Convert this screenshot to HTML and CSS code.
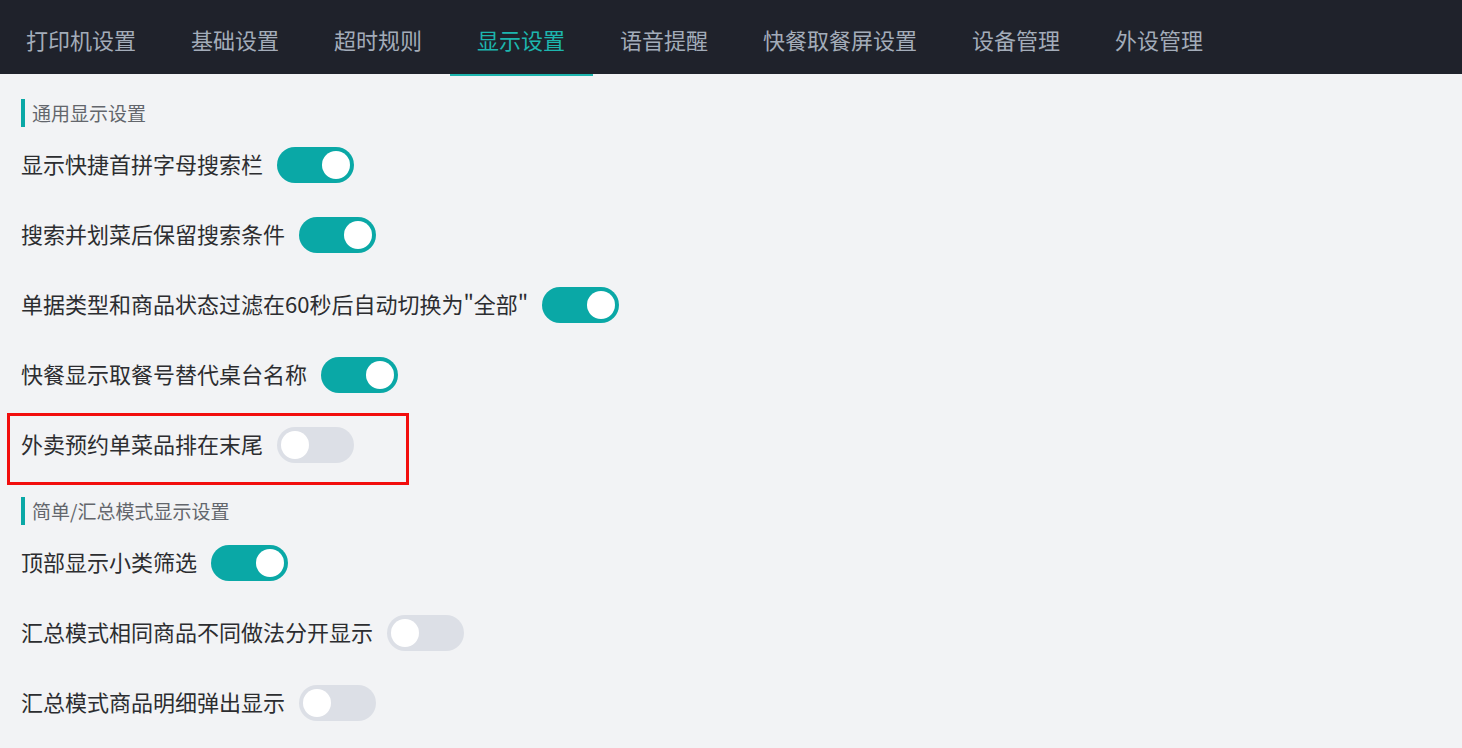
FILE: index.html
```html
<!DOCTYPE html>
<html lang="zh-CN">
<head>
    <meta charset="UTF-8">
    <meta name="viewport" content="width=device-width, initial-scale=1.0">
    <title>显示设置</title>
    <link rel="stylesheet" href="styles.css">
</head>
<body>
    <nav class="tabs">
        <a class="tab">打印机设置</a>
        <a class="tab">基础设置</a>
        <a class="tab">超时规则</a>
        <a class="tab active">显示设置</a>
        <a class="tab">语音提醒</a>
        <a class="tab">快餐取餐屏设置</a>
        <a class="tab">设备管理</a>
        <a class="tab">外设管理</a>
    </nav>

    <main class="content">
        <div class="section-title">通用显示设置</div>

        <div class="row">
            <span class="label">显示快捷首拼字母搜索栏</span>
            <span class="switch on"><span class="knob"></span></span>
        </div>
        <div class="row">
            <span class="label">搜索并划菜后保留搜索条件</span>
            <span class="switch on"><span class="knob"></span></span>
        </div>
        <div class="row">
            <span class="label">单据类型和商品状态过滤在60秒后自动切换为"全部"</span>
            <span class="switch on"><span class="knob"></span></span>
        </div>
        <div class="row">
            <span class="label">快餐显示取餐号替代桌台名称</span>
            <span class="switch on"><span class="knob"></span></span>
        </div>
        <!-- highlighted option -->
        <div class="row marked">
            <span class="label">外卖预约单菜品排在末尾</span>
            <span class="switch"><span class="knob"></span></span>
        </div>

        <div class="section-title">简单/汇总模式显示设置</div>

        <div class="row">
            <span class="label">顶部显示小类筛选</span>
            <span class="switch on"><span class="knob"></span></span>
        </div>
        <div class="row">
            <span class="label">汇总模式相同商品不同做法分开显示</span>
            <span class="switch"><span class="knob"></span></span>
        </div>
        <div class="row">
            <span class="label">汇总模式商品明细弹出显示</span>
            <span class="switch"><span class="knob"></span></span>
        </div>
    </main>
</body>
</html>
```

FILE: styles.css
```css
html, body {
    margin: 0;
    padding: 0;
}
body {
    font-family: "Noto Sans CJK SC", "Noto Sans", sans-serif;
    background-color: #f2f3f5;
    color: #2c2d30;
    height: 100vh;
    overflow: hidden;
}

/* Top tab bar */
.tabs {
    display: flex;
    height: 74px;
    background-color: #1f222b;
}
.tab {
    position: relative;
    display: flex;
    align-items: center;
    padding: 4px 27.5px 0;
    font-size: 22px;
    color: #a3acb9;
    cursor: pointer;
}
.tab:first-child {
    padding-left: 26px;
}
.tab.active {
    color: #1db5ae;
}
.tab.active::after {
    content: "";
    position: absolute;
    left: 0;
    right: 0;
    bottom: -2px;
    height: 2px;
    background-color: #1db5ae;
}

/* Settings list */
.content {
    padding: 8px 21px 0;
}
.section-title {
    height: 28px;
    line-height: 28px;
    margin: 17px 0 3px;
    padding-left: 7px;
    border-left: 4px solid #0aa8a6;
    font-size: 19px;
    color: #63666c;
}
.row {
    position: relative;
    display: flex;
    align-items: center;
    gap: 14px;
    height: 70px;
}
.label {
    font-size: 22px;
    line-height: 30px;
    margin-bottom: 4px;
}
.row.marked::after {
    content: "";
    position: absolute;
    left: -14px;
    top: 3px;
    width: 396px;
    height: 66px;
    border: 3px solid #f20d0d;
    pointer-events: none;
}

/* Toggle switch */
.switch {
    display: flex;
    align-items: center;
    justify-content: flex-start;
    box-sizing: border-box;
    width: 77px;
    height: 36px;
    padding: 0 4px;
    border-radius: 18px;
    background-color: #dcdfe6;
    cursor: pointer;
}
.switch.on {
    justify-content: flex-end;
    background-color: #0aa8a6;
}
.knob {
    width: 28px;
    height: 28px;
    border-radius: 50%;
    background-color: #ffffff;
}
```
